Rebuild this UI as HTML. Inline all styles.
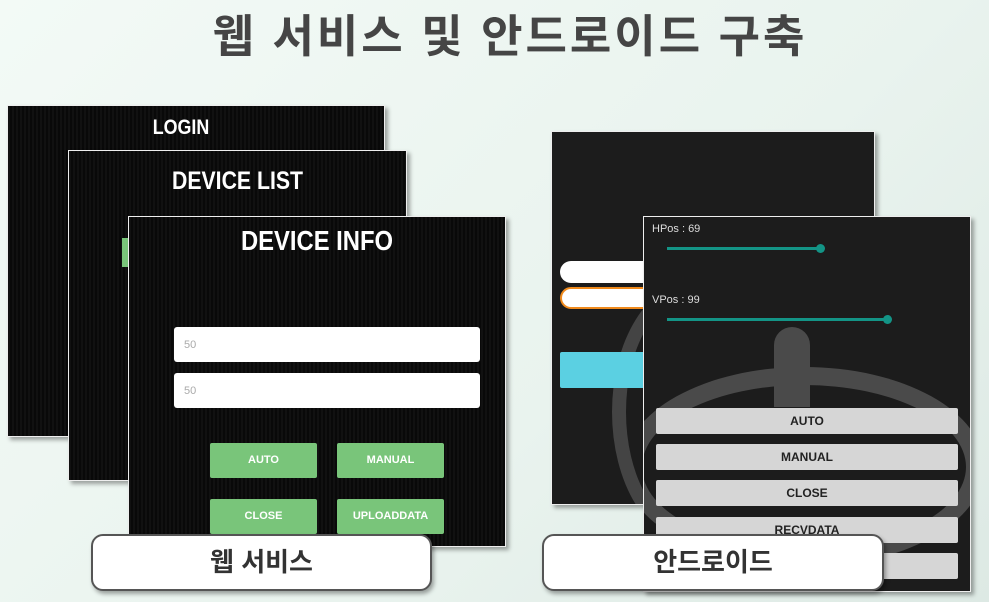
<!DOCTYPE html>
<html><head><meta charset="utf-8"><style>
*{margin:0;padding:0;box-sizing:border-box}
html,body{width:989px;height:602px;overflow:hidden}
body{position:relative;background:linear-gradient(135deg,#f3faf6 0%,#e9f3ee 60%,#dde9e4 100%);font-family:"Liberation Sans","Noto Sans CJK KR",sans-serif}
.abs{position:absolute}
.title{left:0;width:989px;padding-left:31px;top:0px;text-align:center;font-size:45px;font-weight:bold;color:#454545;letter-spacing:3px;white-space:nowrap}
.panel{background:#0c0c0c repeating-linear-gradient(90deg,#111 0 2px,#090909 2px 4px);border:1px solid #eee;box-shadow:3px 3px 4px rgba(0,0,0,.35)}
.ph{color:#fff;font-weight:bold;text-align:center;font-family:"Liberation Sans Narrow","Liberation Sans",sans-serif;transform:scaleX(.85)}
.inp{background:#fff;border-radius:3px;color:#aaa;font-size:11px;padding:12px 10px}
.gb{background:#79c57a;color:#fff;font-size:11px;font-weight:bold;text-align:center;line-height:35px;border-radius:2px}
.lbl{background:#fff;border:2px solid #555;border-radius:12px;box-shadow:2px 3px 4px rgba(0,0,0,.35);text-align:center;font-size:26px;font-weight:bold;color:#333;line-height:53px}
.and{background:#1c1c1c;border:1px solid #eee;box-shadow:3px 3px 4px rgba(0,0,0,.35);overflow:hidden}
.ab{left:12px;width:302px;height:26px;background:#d6d6d6;border-radius:2px;text-align:center;font-size:12px;font-weight:bold;color:#222;line-height:26px}
</style></head><body>
<div class="abs title">웹 서비스 및 안드로이드 구축</div>

<div class="abs panel" style="left:7px;top:105px;width:378px;height:332px"><div class="ph" style="margin-top:10px;font-size:21px;margin-left:-30px">LOGIN</div></div>
<div class="abs panel" style="left:68px;top:150px;width:339px;height:331px"><div class="ph" style="margin-top:16px;font-size:25px">DEVICE LIST</div><div class="abs" style="left:53px;top:87px;width:8px;height:29px;background:#79c57a"></div></div>
<div class="abs panel" style="left:128px;top:216px;width:378px;height:331px">
<div class="ph" style="margin-top:8px;font-size:28px">DEVICE INFO</div>
<div class="abs inp" style="left:45px;top:110px;width:306px;height:35px">50</div>
<div class="abs inp" style="left:45px;top:156px;width:306px;height:35px">50</div>
<div class="abs gb" style="left:81px;top:226px;width:107px;height:35px">AUTO</div>
<div class="abs gb" style="left:208px;top:226px;width:107px;height:35px">MANUAL</div>
<div class="abs gb" style="left:81px;top:282px;width:107px;height:35px">CLOSE</div>
<div class="abs gb" style="left:208px;top:282px;width:107px;height:35px">UPLOADDATA</div>
</div>
<div class="abs lbl" style="left:91px;top:534px;width:341px;height:57px">웹 서비스</div>

<div class="abs and" style="left:551px;top:131px;width:324px;height:374px">
<div class="abs" style="left:60px;top:150px;width:160px;height:260px;border:14px solid #444;border-radius:50%"></div>
<div class="abs" style="left:8px;top:129px;width:100px;height:22px;background:#fff;border-radius:11px"></div>
<div class="abs" style="left:8px;top:155px;width:100px;height:22px;background:#fff;border:2px solid #f08a1c;border-radius:11px"></div>
<div class="abs" style="left:8px;top:220px;width:100px;height:36px;background:#5bd0e2;border-radius:2px"></div>
</div>
<div class="abs and" style="left:643px;top:216px;width:328px;height:376px">
<div class="abs" style="left:-20px;top:150px;width:360px;height:200px;border:18px solid #4a4a4a;border-radius:50%"></div>
<div class="abs" style="left:130px;top:110px;width:36px;height:80px;background:#4a4a4a;border-radius:18px 18px 0 0"></div>
<div class="abs" style="left:8px;top:6px;color:#ddd;font-size:11px">HPos : 69</div>
<div class="abs" style="left:23px;top:30px;width:153px;height:3px;background:#139486"></div>
<div class="abs" style="left:172px;top:27px;width:9px;height:9px;background:#139486;border-radius:50%"></div>
<div class="abs" style="left:8px;top:77px;color:#ddd;font-size:11px">VPos : 99</div>
<div class="abs" style="left:23px;top:101px;width:220px;height:3px;background:#139486"></div>
<div class="abs" style="left:239px;top:98px;width:9px;height:9px;background:#139486;border-radius:50%"></div>
<div class="abs ab" style="top:191px">AUTO</div>
<div class="abs ab" style="top:227px">MANUAL</div>
<div class="abs ab" style="top:263px">CLOSE</div>
<div class="abs ab" style="top:300px">RECVDATA</div>
<div class="abs ab" style="top:336px"></div>
</div>
<div class="abs lbl" style="left:542px;top:534px;width:342px;height:57px">안드로이드</div>
</body></html>
